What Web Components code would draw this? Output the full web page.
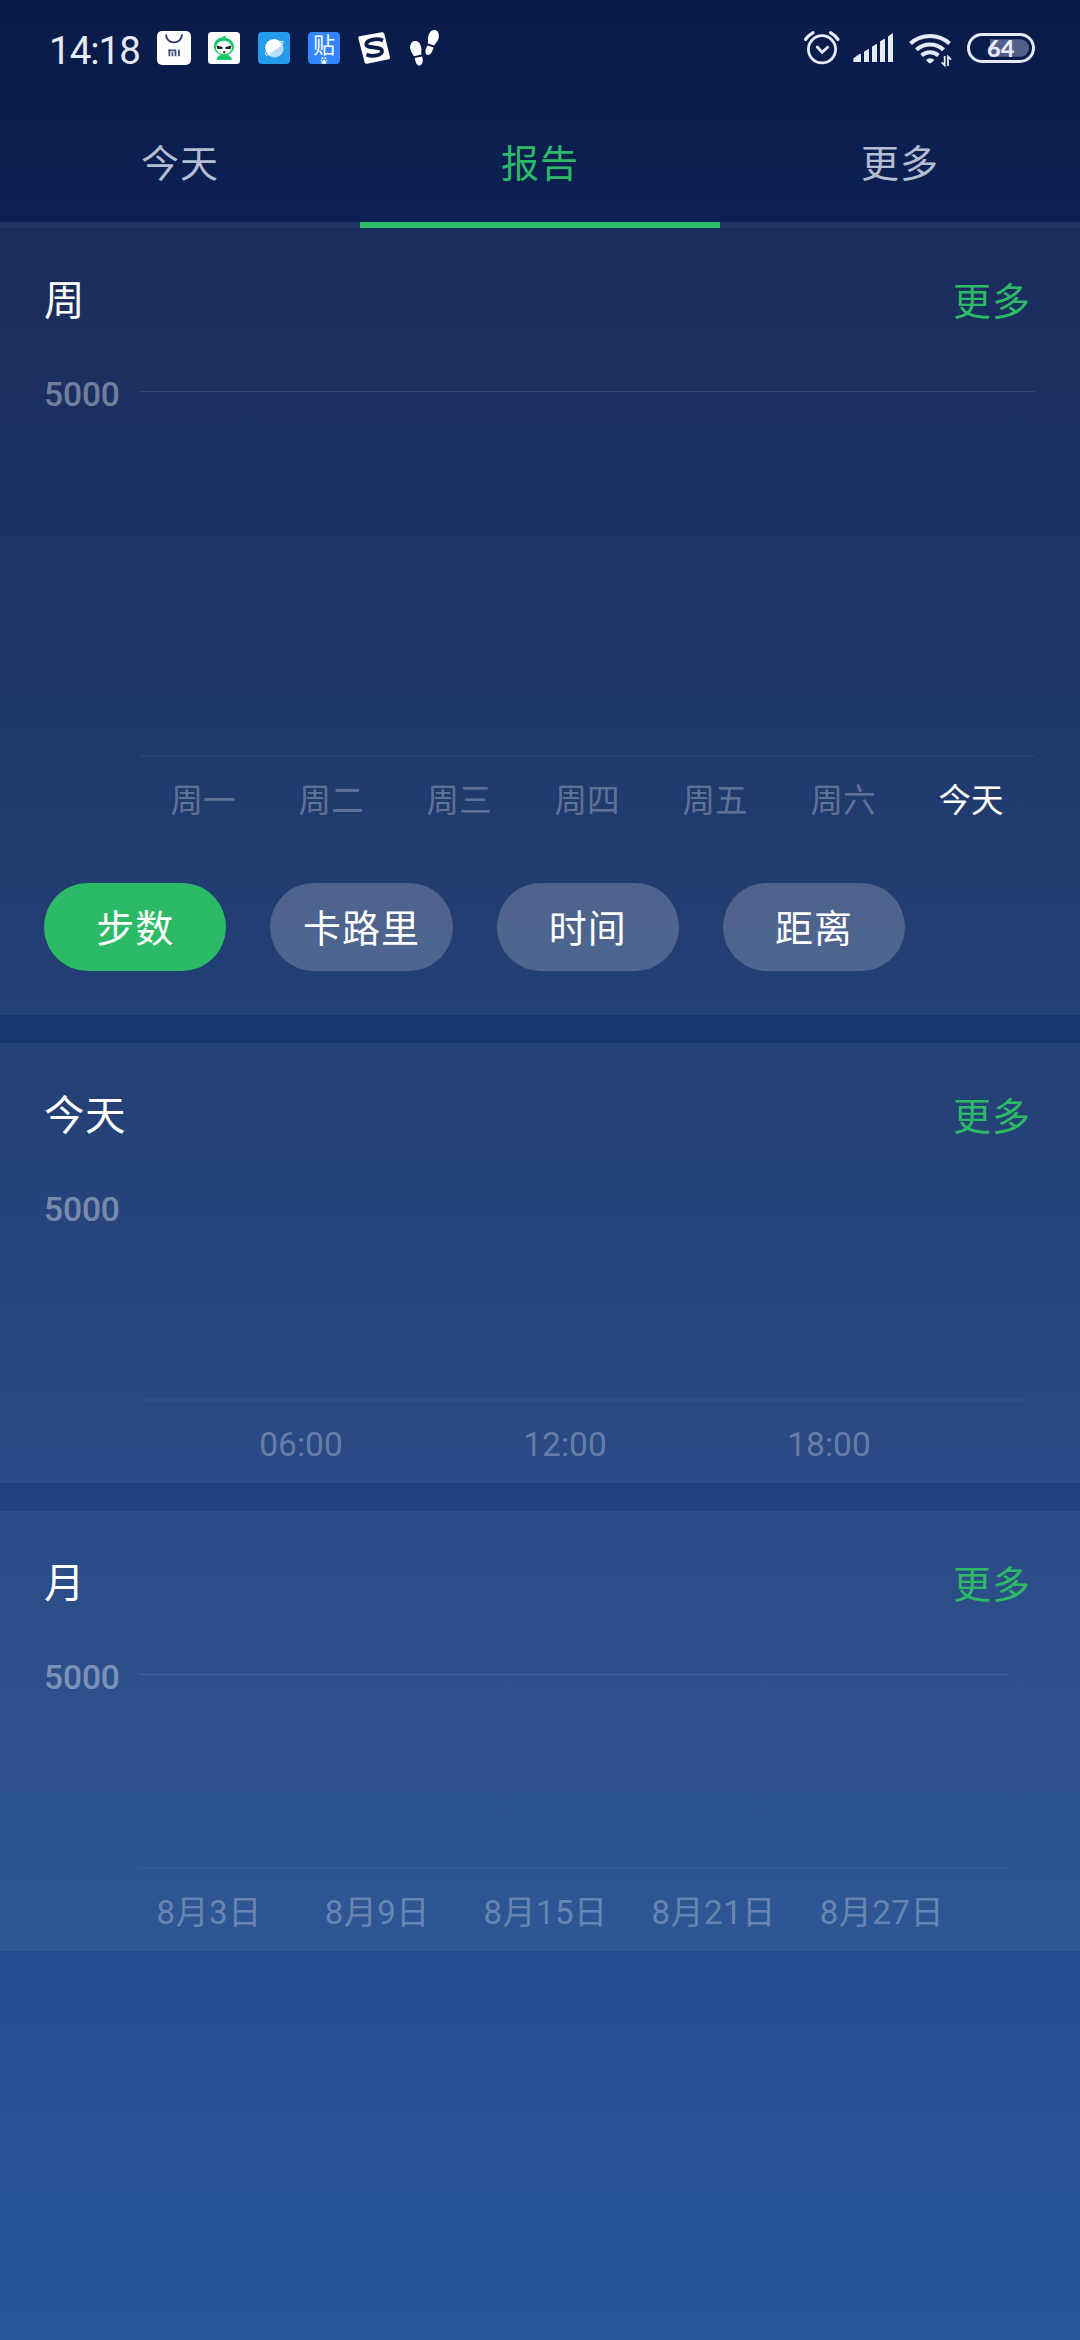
<!DOCTYPE html>
<html lang="zh-CN">
<head>
<meta charset="utf-8">
<title>报告</title>
<style>
  html, body { margin: 0; }
  body { width: 1080px; height: 2340px; overflow: hidden; font-family: Roboto, "Noto Sans CJK SC", sans-serif; color: #fff; }
</style>
</head>
<body>
<steps-app></steps-app>
<script>
function define(name, html, setup) {
  const tpl = document.createElement('template');
  tpl.innerHTML = html;
  customElements.define(name, class extends HTMLElement {
    connectedCallback() {
      if (this.shadowRoot) return;
      this.attachShadow({ mode: 'open' }).append(tpl.content.cloneNode(true));
      if (setup) setup(this, this.shadowRoot);
    }
  });
}

define('status-bar', `
<style>
  :host { display: flex; height: 96px; box-sizing: border-box; padding: 0 40px 0 49px; align-items: center; }
  .time { width: 95px; font-size: 38.500px; line-height: 96px; letter-spacing: -1px; color: #e6eaf6; height: 96px; padding-top: 3px; }
  .time { align-self: flex-start; }
  svg { display: block; height: 96px; flex: none; }
  .apps { display: flex; gap: 10px; margin-left: 8px; }
  .apps svg:first-child { margin-right: -2px; }
  .sys { display: flex; gap: 8px; margin-left: auto; }
  .sys svg:nth-child(2) { margin-right: 2px; }
</style>
<div class="time">14:18</div>
<div class="apps">
  <svg width="44" viewBox="152 0 44 96"><rect x="157" y="31" width="34" height="34" rx="5" fill="#fff"/><path d="M166 34.500c0 10.500 16 10.500 16 0" fill="none" stroke="#26356a" stroke-width="1.800"/><g fill="#3c4c7e"><rect x="168.500" y="49.500" width="7.500" height="1.800"/><rect x="168.500" y="49.500" width="1.800" height="6.700"/><rect x="174.600" y="50" width="1.800" height="6.200"/><rect x="171.600" y="52.300" width="1.700" height="3.900"/><rect x="178" y="49.500" width="1.800" height="6.700"/></g></svg>
  <svg width="40" viewBox="204 0 40 96"><rect x="208" y="32" width="32" height="32" rx="3.500" fill="#fff"/><path d="M214 47c0-6 4-9.500 8-9.500 1-1 3-2 4.500-1.700-1 .7-1 1.200-.9 1.900 5.400 1.200 8.400 4.800 8.400 9.300 0 4-3 6.500-6 7.500l2 2c1.500 1 1.700 2 1.700 3.500h-15c0-2 .5-3 2-4l2-1.500c-4-1-6.700-4-6.700-7.500z" fill="#19c86a"/><ellipse cx="223.900" cy="47.500" rx="7.900" ry="6.800" fill="#fff"/><path d="M216.500 45.500l6 1.500v2h-5zM231.500 45.500l-6 1.500v2h5z" fill="#222"/><rect x="223.300" y="51" width="1.800" height="2.500" fill="#333"/></svg>
  <svg width="40" viewBox="254 0 40 96"><rect x="258" y="32" width="32" height="32" rx="4" fill="#259bea"/><circle cx="274" cy="47.800" r="8.900" fill="#fff"/><path d="M268.200 54.800L282.500 44.500a8.900 8.900 0 0 1-14.300 10.300z" fill="#b7dcfb"/><path d="M267 51c-2 2-2 3.500-1 4 1 .4 3-.2 5-1M280 42c2-.7 3.200-.9 3.300-.3.100.7-.8 2-2 3.300" fill="none" stroke="#fff" stroke-width="1"/></svg>
  <svg width="40" viewBox="304 0 40 96"><rect x="308" y="32" width="32" height="32" rx="4" fill="#3385ff"/><text x="324" y="53.300" text-anchor="middle" font-size="22" fill="#fff" font-family="Noto Sans CJK SC, sans-serif">贴</text><g fill="#fff"><circle cx="322.300" cy="58.300" r="1"/><circle cx="325.300" cy="58.300" r="1"/><circle cx="321.500" cy="60.800" r=".8"/><circle cx="326.500" cy="60.800" r=".8"/><path d="M321.500 63.800c-.5-2 1.500-2.500 2.400-4.200 1 1.700 3 2.200 2.500 4.200z"/></g></svg>
  <svg width="42" viewBox="354 0 42 96"><path d="M359.300 36.200L382 32.300q1.800-.2 2.300 1.600L390 57q.3 1.800-1.300 2.300L367 63.800q-1.800.2-2.400-1.500L358.300 38q-.2-1.500 1-1.800z" fill="#fff"/><path d="M383 40.500c-7-3-17-.2-16.700 4 .3 4.300 15.200 1.500 15.700 6.500.4 4.300-9.500 6.300-15.500 3.500" fill="none" stroke="#0a1e4c" stroke-width="3.800"/></svg>
  <svg width="40" viewBox="406 0 40 96"><g fill="#fff"><path d="M414.500 41c-3.600.6-4.700 4.500-4.200 8 .4 2.800 2.500 5 3.700 7.300l7.500-1.700c-.5-2.500.3-4.600-.3-7.300-.9-4-3.200-6.900-6.700-6.300z"/><path d="M414.800 58l7.300-1.500c1.300 3.600.7 8.300-2.200 9.100-2.900.5-4.500-3-5.100-7.600z"/><path d="M434.500 30c3.700.3 4.900 4 4.200 8-.6 3-3.200 4.900-4.500 7.500l-6.300-2c.4-2.300-.2-4.300.3-6.800.9-4 2.900-6.900 6.300-6.700z"/><path d="M427.500 45.500l6 2c-.9 4-3.400 8-6 7.500-3-.8-2.500-5.500 0-9.500z"/></g></svg>
</div>
<div class="sys">
  <svg width="44" viewBox="800 0 44 96"><g fill="none" stroke="#e6eaf6" stroke-linecap="round"><circle cx="822" cy="49.300" r="13.600" stroke-width="2.800"/><path d="M805.500 39.500q2.500-3.800 7.500-6.800M838 39.500q-2.500-3.800-7.500-6.800" stroke-width="3.200"/><path d="M817.200 47l4.900 5.200 5.600-4.900" stroke-width="2.800"/></g></svg>
  <svg width="44" viewBox="852 0 44 96"><g fill="#e6eaf6"><path d="M853.300 62v-3.500l5.700-4.300q2-1.200 2 .8v7zM864 62v-10.200l4-2.600q1-.5 1 .5V62zM872 62V46.800l4-2.600q1-.5 1 .5V62zM880 62V41.500l4-2.600q1-.5 1 .5V62zM888 62V36.500l4-3q1-.5 1 .5v28z"/></g></svg>
  <svg width="48" viewBox="906 0 48 96"><g fill="none" stroke="#e6eaf6" stroke-width="4"><path d="M910.500 43.500a29 29 0 0 1 39 0"/><path d="M916.400 49.800a20 20 0 0 1 27.200 0"/><path d="M921.600 55.600a12.500 12.500 0 0 1 16.800 0"/></g><path d="M925.800 60a6 6 0 0 1 8.600 0l-3.300 3q-1.100.7-2.200 0z" fill="#e6eaf6"/><path d="M944.700 56v9.300l-3-3M948 66v-9.300l3 3" fill="none" stroke="#e6eaf6" stroke-width="1.800"/></svg>
  <svg width="78" viewBox="962 0 78 96"><rect x="968.500" y="34.500" width="65" height="27" rx="13.500" fill="none" stroke="#e6eaf6" stroke-width="3"/><path d="M990 39.300h30.300a8.700 8.700 0 0 1 0 17.400H990z" fill="#51608a"/><text x="1000.700" y="56.700" text-anchor="middle" font-family="Lato, sans-serif" font-weight="900" font-size="23.500" fill="#e6eaf6">64</text></svg>
</div>`);

define('tab-item', `
<style>
  :host { display: block; flex: 1; height: 132px; box-sizing: border-box; text-align: center; font-size: 38px; letter-spacing: 1px; line-height: 136px; color: #b5bdd0; border-bottom: 6px solid rgba(255,255,255,.085); }
  :host([active]) { color: #2dba67; border-color: #2dba67; }
</style><slot></slot>`);

define('tab-bar', `<style>:host { display: flex; }</style><slot></slot>`);

define('report-card', `
<style>
  :host { display: block; box-sizing: border-box; background: rgba(255,255,240,.055); margin-bottom: 28px; padding: 0 44px; }
  header { display: flex; justify-content: space-between; height: 146px; line-height: 147px; letter-spacing: 1px; }
  .t { font-size: 40.500px; letter-spacing: .5px; }
  .m { font-size: 38px; line-height: 148px; color: #2dba67; margin-right: 5px; }
</style>
<header><span class="t"></span><span class="m">更多</span></header><slot></slot>`,
(el, r) => { r.querySelector('.t').textContent = el.getAttribute('heading'); });

/* Empty chart: scale label on the left, optional limit line, baseline and axis labels. */
define('step-chart', `
<style>
  :host { display: flex; line-height: 42px; }
  .y { width: 95px; font-size: 33.500px; line-height: 42px; font-weight: 500; color: rgba(255,255,255,.4); letter-spacing: -.1px; }
  .plot { box-sizing: border-box; width: var(--w); height: var(--h); margin-top: 17px; border-bottom: 2px solid rgba(255,255,255,.035); }
  :host([limit]) .plot { border-top: 1px solid rgba(255,255,255,.1); }
  .axis { display: flex; margin-left: var(--pad, 0); padding-top: 23px; font-size: var(--fs, 33.500px); letter-spacing: var(--ls, 0); color: rgba(255,255,255,.3); }
  .axis span { flex: none; width: var(--cell); text-align: center; white-space: nowrap; }
  .axis .now { color: #fff; }
</style>
<div class="y">5000</div>
<div><div class="plot"></div><div class="axis"></div></div>`,
(el, r) => {
  const axis = r.querySelector('.axis');
  el.getAttribute('labels').split(',').forEach(t => {
    const s = document.createElement('span');
    s.textContent = t;
    if (t === el.getAttribute('now')) s.className = 'now';
    axis.append(s);
  });
});

define('metric-pill', `
<style>
  :host { display: block; width: 182.300px; height: 88px; border-radius: 44px; background: rgba(255,255,255,.2); text-align: center; font-size: 38px; letter-spacing: 1px; line-height: 92px; color: #fff; }
  :host([active]) { background: #2dba67; }
</style><slot></slot>`);

define('pill-row', `<style>:host { display: flex; gap: 44px; }</style><slot></slot>`);

define('steps-app', `
<style>
  :host { display: block; height: 2340px; background: linear-gradient(#081b48 0, #0c2054 228px, #17366e 1029px, #1e4180 1497px, #234d90 1951px, #28579c 2340px); }
  .week { height: 787px; } .today { height: 440px; } .month { height: 440px; }
  .week step-chart { --w: 896px; --h: 366px; --cell: 128px; --fs: 32.500px; }
  .today step-chart { --w: 888px; --h: 195px; --cell: 264px; --pad: 30px; }
  .month step-chart { --w: 868px; --h: 195px; --cell: 168.200px; --pad: -14px; --fs: 33px; --ls: .5px; }
  pill-row { margin-top: 61px; }
</style>
<status-bar></status-bar>
<tab-bar><tab-item>今天</tab-item><tab-item active>报告</tab-item><tab-item>更多</tab-item></tab-bar>
<report-card class="week" heading="周">
  <step-chart limit now="今天" labels="周一,周二,周三,周四,周五,周六,今天"></step-chart>
  <pill-row><metric-pill active>步数</metric-pill><metric-pill>卡路里</metric-pill><metric-pill>时间</metric-pill><metric-pill>距离</metric-pill></pill-row>
</report-card>
<report-card class="today" heading="今天"><step-chart labels="06:00,12:00,18:00"></step-chart></report-card>
<report-card class="month" heading="月"><step-chart limit labels="8月3日,8月9日,8月15日,8月21日,8月27日"></step-chart></report-card>`);
</script>
</body>
</html>
